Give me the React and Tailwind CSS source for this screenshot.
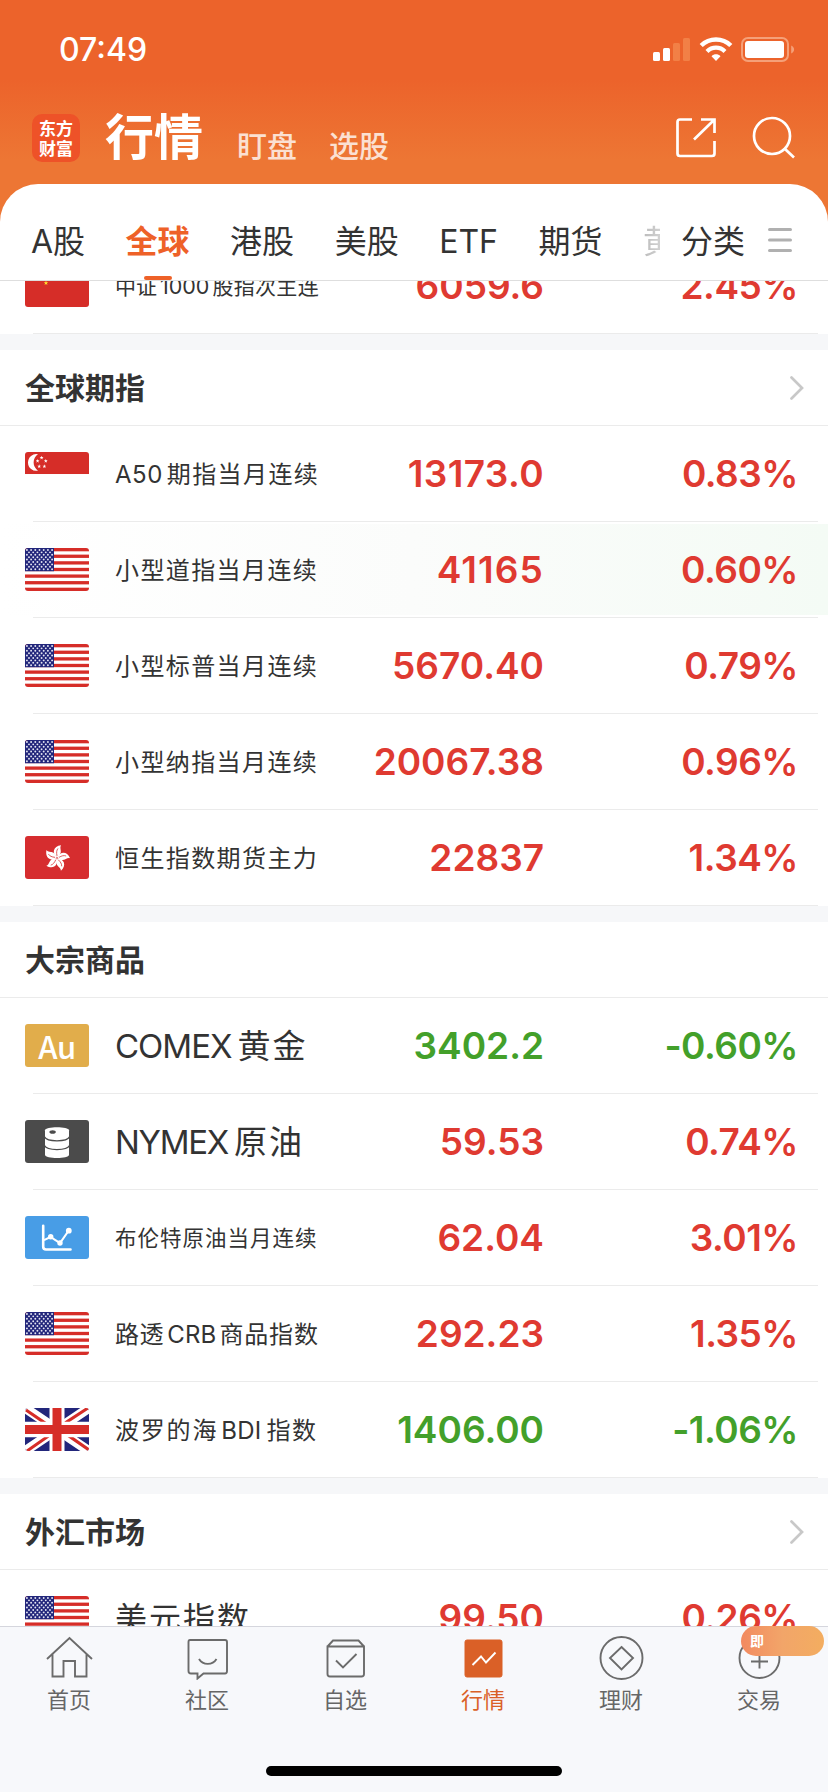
import React from 'react'

const SANS = "font-['Inter','Noto_Sans_CJK_SC',sans-serif]"
const CJK = "font-['Noto_Sans_CJK_SC',sans-serif]"

/* ---------- Flags ---------- */

const starRows = [0, 1, 2, 3, 4, 5, 6, 7, 8]

const FlagUS = () => (
  <svg viewBox="0 0 64 42" preserveAspectRatio="none" className="w-full h-full">
    <rect width="64" height="42" fill="#fff" />
    {[0, 2, 4, 6, 8, 10, 12].map((i) => (
      <rect key={i} y={i * 3.23} width="64" height="3.23" fill="#d62d28" />
    ))}
    <rect width="29" height="22.7" fill="#22267b" />
    {starRows.map((r) =>
      Array.from({ length: r % 2 ? 6 : 7 }).map((_, c) => (
        <circle
          key={`${r}-${c}`}
          cx={1.9 + c * 4.2 + (r % 2 ? 2.1 : 0)}
          cy={1.9 + r * 2.35}
          r="0.95"
          fill="#e4e5f2"
        />
      ))
    )}
  </svg>
)

const FlagUK = () => (
  <svg viewBox="0 0 64 42" preserveAspectRatio="none" className="w-full h-full">
    <rect width="64" height="42" fill="#22267b" />
    <path d="M0 0L64 42M64 0L0 42" stroke="#fff" strokeWidth="9.5" />
    <path d="M1 2L22 16M42 26L64 41" stroke="#d62d28" strokeWidth="3" />
    <path d="M63 0L38 16M27 25L2 42" stroke="#d62d28" strokeWidth="3" />
    <path d="M32 0V42M0 21H64" stroke="#fff" strokeWidth="15" />
    <path d="M32 0V42M0 21H64" stroke="#d62d28" strokeWidth="9" />
  </svg>
)

const star = (cx, cy, r) =>
  Array.from({ length: 10 })
    .map((_, i) => {
      const a = (Math.PI / 5) * i - Math.PI / 2
      const d = i % 2 ? r * 0.42 : r
      return `${cx + d * Math.cos(a)},${cy + d * Math.sin(a)}`
    })
    .join(' ')

const FlagSG = () => (
  <svg viewBox="0 0 64 42" preserveAspectRatio="none" className="w-full h-full">
    <rect width="64" height="42" fill="#fff" />
    <rect width="64" height="21.5" fill="#d62d28" />
    <path d="M13 2.2A8.2 8.2 0 1 0 13 18.2A9.5 9.5 0 0 1 13 2.2Z" fill="#fff" />
    {[[16.6, 5.6], [12.6, 8.8], [20.8, 8.8], [14.2, 14], [19.4, 14]].map(([x, y]) => (
      <polygon key={`${x}-${y}`} points={star(x, y, 2)} fill="#fff" />
    ))}
  </svg>
)

const FlagHK = () => (
  <svg viewBox="0 0 64 42" preserveAspectRatio="none" className="w-full h-full">
    <rect width="64" height="42" fill="#d62d2f" />
    {[12, 84, 156, 228, 300].map((deg) => (
      <g key={deg} transform={`rotate(${deg} 32 21.5)`}>
        <path d="M32 21C26 18.5 25.500 11 33.500 8.500C31.500 12 38 15 32 21Z" fill="#fff" />
        <path d="M31.600 19.500C30.200 16.500 30 14.200 31 12.200" stroke="#d62d2f" strokeWidth="0.7" fill="none" />
      </g>
    ))}
  </svg>
)

const FlagCN = () => (
  <svg viewBox="0 0 64 42" preserveAspectRatio="none" className="w-full h-full">
    <rect width="64" height="42" fill="#d62d28" />
    <polygon points={star(11, 10, 6)} fill="#ffde2e" />
    <polygon points={star(21, 4.5, 2.2)} fill="#ffde2e" />
    <polygon points={star(25, 8.5, 2.2)} fill="#ffde2e" />
    <polygon points={star(25, 13, 2.2)} fill="#ffde2e" />
    <polygon points={star(21, 18.6, 2.4)} fill="#ffde2e" />
  </svg>
)

const IconGold = () => (
  <div className="w-full h-full bg-[#e1ad4b] flex items-center justify-center">
    <span className="font-['Noto_Sans_CJK_SC',sans-serif] font-medium text-[31px] leading-none text-white tracking-[-0.3px] -mt-px">
      Au
    </span>
  </div>
)

const IconOil = () => (
  <svg viewBox="0 0 64 42" preserveAspectRatio="none" className="w-full h-full">
    <rect width="64" height="42" fill="#4b4b4b" />
    <path d="M20 10C20 6 44 6 44 10V34C44 38.200 20 38.200 20 34Z" fill="#fff" />
    <path d="M19.500 16.500C22 21.600 42 21.600 44.500 16.500M19.500 25C22 30.200 42 30.200 44.500 25" stroke="#4b4b4b" strokeWidth="1.2" fill="none" />
    <ellipse cx="27.600" cy="11.800" rx="3.200" ry="1.700" fill="#4b4b4b" />
  </svg>
)

const IconChart = () => (
  <svg viewBox="0 0 64 42" preserveAspectRatio="none" className="w-full h-full">
    <rect width="64" height="42" fill="#489de6" />
    <path d="M18.200 9.500V30Q18.200 32.700 21 32.700H45.500" stroke="#fff" strokeWidth="2.6" strokeLinecap="round" fill="none" />
    <path d="M19 23.500L25.500 20.500L35 26.500L43.500 14.500" stroke="#fff" strokeWidth="2" fill="none" />
    <circle cx="25.700" cy="20.300" r="2.700" fill="#fff" />
    <circle cx="35" cy="26.300" r="2.700" fill="#fff" />
    <circle cx="43.800" cy="14.300" r="2.900" fill="#fff" />
  </svg>
)

/* ---------- Quotes ---------- */

const sections = [
  {
    title: '全球期指',
    more: true,
    rows: [
      { flag: FlagSG, name: [['A50', 'text-[24px] tracking-[0.5px] mr-[4px]'], ['期指当月连续', 'text-[24px] tracking-[1.4px]']], price: '13173.0', pct: '0.83%', spread: 'tracking-[0.4px]' },
      { flag: FlagUS, name: [['小型道指当月连续', 'text-[24px] tracking-[1.4px]']], price: '41165', pct: '0.60%', flash: true, spread: 'tracking-[1.1px]' },
      { flag: FlagUS, name: [['小型标普当月连续', 'text-[24px] tracking-[1.4px]']], price: '5670.40', pct: '0.79%' },
      { flag: FlagUS, name: [['小型纳指当月连续', 'text-[24px] tracking-[1.4px]']], price: '20067.38', pct: '0.96%' },
      { flag: FlagHK, name: [['恒生指数期货主力', 'text-[24px] tracking-[1.4px]']], price: '22837', pct: '1.34%' },
    ],
  },
  {
    title: '大宗商品',
    rows: [
      { flag: IconGold, name: [['COMEX', 'text-[33px] tracking-[-1px] mr-[6px]'], ['黄金', 'text-[33px] tracking-[2px]']], price: '3402.2', pct: '-0.60%' },
      { flag: IconOil, name: [['NYMEX', 'text-[33px] tracking-[-1.3px] mr-[6px]'], ['原油', 'text-[33px] tracking-[2px]']], price: '59.53', pct: '0.74%' },
      { flag: IconChart, name: [['布伦特原油当月连续', 'text-[21.5px] tracking-[1px]']], price: '62.04', pct: '3.01%' },
      { flag: FlagUS, name: [['路透', 'text-[24px] tracking-[0.6px]'], ['CRB', 'text-[24px] tracking-[0.2px] mx-[3px]'], ['商品指数', 'text-[24px] tracking-[0.8px]']], price: '292.23', pct: '1.35%' },
      { flag: FlagUK, name: [['波罗的海', 'text-[24px] tracking-[1.8px]'], ['BDI', 'text-[24px] tracking-[0.3px] mx-[3px] pr-[2px]'], ['指数', 'text-[24px] tracking-[1.4px]']], price: '1406.00', pct: '-1.06%' },
    ],
  },
  {
    title: '外汇市场',
    more: true,
    rows: [
      { flag: FlagUS, name: [['美元指数', 'text-[32px] tracking-[2px]']], price: '99.50', pct: '0.26%' },
    ],
  },
]

const lastOfPrevious = {
  flag: FlagCN,
  name: [['中证', 'text-[21px]'], ['1000', 'text-[21.5px] mx-[3px]'], ['股指次主连', 'text-[21px] tracking-[0.3px]']],
  price: '6059.6',
  pct: '2.45%',
}

const QuoteRow = ({ row }) => {
  const Flag = row.flag
  const color = row.pct.startsWith('-') ? 'text-[#43a02a]' : 'text-[#df3a31]'
  return (
    <div className="h-24 shrink-0 flex flex-col">
      <div
        className={`flex-1 flex items-center pl-[25px] ${
          row.flash ? 'my-[2px] bg-gradient-to-r from-white via-[#fbfcfb] to-[#f4fbf5]' : ''
        }`}
      >
        <div className="w-16 h-[43px] shrink-0 rounded-[3px] overflow-hidden">
          <Flag />
        </div>
        <div className="w-[215px] ml-[26px] pt-[2px] shrink-0 flex items-center whitespace-nowrap text-[#333]">
          {row.name.map(([text, style]) => (
            <span key={text} className={`leading-none ${style}`}>{text}</span>
          ))}
        </div>
        <div className={`w-[214px] text-right text-[37px] leading-none font-semibold ${color} ${row.spread || ''}`}>{row.price}</div>
        <div className={`w-[254px] text-right text-[37px] leading-none font-semibold tracking-[-0.5px] ${color}`}>{row.pct}</div>
      </div>
      <div className="h-px ml-[33px] mr-[10px] bg-[#ebebeb]" />
    </div>
  )
}

const Section = ({ section }) => (
  <div className="shrink-0">
    <div className="h-4 bg-[#f6f7f9]" />
    <div className="h-[76px] border-b border-[#ebebeb] pl-[25px] pr-6 flex items-center justify-between">
      <h2 className={`${CJK} -mt-1 text-[30px] leading-none font-bold text-[#333]`}>{section.title}</h2>
      {section.more && (
        <svg width="14" height="24" viewBox="0 0 14 24" fill="none">
          <path d="M1.500 1.500L12 12L1.500 22.500" stroke="#c8c8c8" strokeWidth="2.700" strokeLinecap="round" />
        </svg>
      )}
    </div>
    {section.rows.map((row) => (
      <QuoteRow key={row.price} row={row} />
    ))}
  </div>
)

/* ---------- Header ---------- */

const StatusBar = () => (
  <div className="h-[99px] pl-[59px] pr-8 flex items-center justify-between">
    <span className="text-[32px] leading-none font-medium text-white">07:49</span>
    <svg width="143" height="26" viewBox="0 0 143 26" fill="none">
      <rect x="0" y="15" width="7" height="9" rx="1.500" fill="#fff" />
      <rect x="10" y="11" width="7" height="13" rx="1.500" fill="#fff" />
      <rect x="20" y="6" width="7" height="18" rx="1.500" fill="#f28046" />
      <rect x="30" y="1" width="7" height="23" rx="1.500" fill="#f28046" />
      <path d="M48.200 8.500C56.500 0.500 69.500 0.500 77.800 8.500" stroke="#fff" strokeWidth="4.500" />
      <path d="M54 14.500C59 9.400 67 9.400 72 14.500" stroke="#fff" strokeWidth="4.200" />
      <path d="M58.500 19.200C61 16.700 65 16.700 67.500 19.200L63 24Z" fill="#fff" />
      <rect x="89" y="1" width="46" height="23" rx="6" stroke="#f5a078" strokeWidth="2" />
      <rect x="92" y="4" width="39" height="17" rx="3" fill="#fff" />
      <path d="M138.200 8.500C142 10 142 15 138.200 16.500Z" fill="#f5a078" />
    </svg>
  </div>
)

const TitleBar = () => (
  <div className="h-[85px] pl-8 pr-8 flex items-start justify-between">
    <div className={`${CJK} flex items-start text-white`}>
      <div className="w-12 h-12 mt-[15px] rounded-[10px] bg-[#ee5228] flex flex-col items-center justify-center text-[17px] leading-[20px] font-bold">
        <span>东方</span>
        <span>财富</span>
      </div>
      <h1 className="ml-[25px] mt-[11px] text-[49px] leading-[48px] font-bold">行情</h1>
      <span className="ml-[34px] mt-[30px] text-[30px] leading-[30px] font-medium text-[#fbe0d2]">盯盘</span>
      <span className="ml-8 mt-[30px] text-[30px] leading-[30px] font-medium text-[#fbe0d2]">选股</span>
    </div>
    <div className="flex items-start mt-[17px]">
      <svg width="42" height="44" viewBox="0 0 42 44" fill="none" stroke="#fff" strokeWidth="2.700">
        <path d="M17 3.500H5Q2.500 3.500 2.500 6V37.500Q2.500 40 5 40H37Q39.500 40 39.500 37.500V25" />
        <path d="M26 3.500H39.500V17M39 4L19 23.500" />
      </svg>
      <svg width="44" height="44" viewBox="0 0 44 44" fill="none" stroke="#fff" strokeWidth="2.700" className="ml-[35px]">
        <circle cx="20" cy="20" r="18" />
        <path d="M32.500 32.500L42 41.500" />
      </svg>
    </div>
  </div>
)

const tabs = ['A股', '全球', '港股', '美股', 'ETF', '期货']

const Tabs = () => (
  <div className="h-[97px] bg-white rounded-t-[38px] border-b border-[#dedede] flex pl-[31px] text-[32px] leading-none text-[#333]">
    <div className="flex gap-[40.500px] w-[629px] overflow-hidden whitespace-nowrap">
      {tabs.map((tab) =>
        tab === '全球' ? (
          <div key={tab} className="flex flex-col items-center justify-between pt-[42px] font-bold text-[#ee6128]">
            <span>{tab}</span>
            <i className="w-7 h-1 rounded-full bg-[#ee6128]" />
          </div>
        ) : (
          <div key={tab} className="pt-[42px]">{tab}</div>
        )
      )}
      <div className="pt-[42px] bg-gradient-to-r from-[#bbb] to-[#eee] to-60% bg-clip-text text-transparent">黄金</div>
    </div>
    <div className="pt-[42px] ml-[21px]">分类</div>
    <svg width="24" height="26" viewBox="0 0 24 26" stroke="#b0b0b0" strokeWidth="3" strokeLinecap="round" className="mt-[43px] ml-[23px]">
      <path d="M1.500 2.500H22.500M1.500 13H22.500M1.500 23.500H22.500" />
    </svg>
  </div>
)

/* ---------- Bottom bar ---------- */

const navItems = [
  {
    label: '首页',
    icon: (
      <path d="M1 23L23.500 2L46 23M6.500 18.500V40.500H17.500V25H29V40.500H40.500V18.500" />
    ),
  },
  {
    label: '社区',
    icon: (
      <>
        <path d="M6 4H41Q43 4 43 6V35Q43 37.500 41 37.500H19.500L13.500 42.500V37.500H7Q4.500 37.500 4.500 35V6Q4.500 4 6 4Z" />
        <path d="M15 23C19 29.500 28.500 29.500 32.500 23" />
      </>
    ),
  },
  {
    label: '自选',
    icon: (
      <>
        <path d="M5.500 10.500H42V38Q42 40.500 39.500 40.500H8Q5.500 40.500 5.500 38ZM5.500 10.500L11 4.500H36.500L42 10.500" />
        <path d="M14 24.500L21 31.500L34.500 18" />
      </>
    ),
  },
  {
    label: '行情',
    active: true,
    icon: (
      <>
        <rect x="5" y="4" width="37" height="37" rx="2" fill="#da6027" stroke="#da6027" strokeWidth="1" />
        <path d="M12.500 29L21 20.500L26 26.500L35.500 16.500" stroke="#fff" />
      </>
    ),
  },
  {
    label: '理财',
    icon: (
      <>
        <circle cx="23.500" cy="22" r="21" />
        <path d="M23.500 11L35 22L23.500 33.500L12 22Z" />
      </>
    ),
  },
  {
    label: '交易',
    icon: (
      <>
        <circle cx="23.500" cy="22" r="20" />
        <path d="M23.500 12V32.500M15 25.500H32" />
      </>
    ),
  },
]

const BottomNav = () => (
  <div className="h-[166px] shrink-0 relative bg-[#f7f8fb] border-t border-[#d5d6dd] flex flex-col">
    <div className="grid grid-cols-6 pt-[9px]">
      {navItems.map((item) => (
        <div key={item.label} className="flex flex-col items-center">
          <svg width="47" height="44" viewBox="0 0 47 44" fill="none" stroke="#6b6b6b" strokeWidth="1.900">
            {item.icon}
          </svg>
          <span className={`${CJK} mt-[7px] text-[22px] leading-[22px] ${item.active ? 'text-[#da6027]' : 'text-[#666]'}`}>
            {item.label}
          </span>
        </div>
      ))}
    </div>
    <div className="w-[296px] h-[10px] rounded-full bg-black mx-auto mt-auto mb-4" />
    {/* Promo badge over the trade tab */}
    <div className={`${CJK} absolute -top-px right-1 w-[83px] h-[30px] rounded-full pl-[9px] bg-gradient-to-r from-[#f28a60] via-[#f2a569] to-[#f3ad60] text-[14px] leading-[28px] font-bold text-white`}>
      即
    </div>
  </div>
)

const App = () => {
  return (
    <div className={`${SANS} w-[828px] h-[1792px] overflow-hidden flex flex-col bg-white`}>
      <div className="shrink-0 bg-[linear-gradient(to_bottom,#ec632b_0px,#ec632b_80px,#ed7634_160px,#ed7634_100%)]">
        <StatusBar />
        <TitleBar />
        <Tabs />
      </div>

      <div className="flex-1 min-h-0 overflow-hidden flex flex-col">
        <div className="h-[53px] shrink-0 overflow-hidden flex flex-col justify-end">
          <QuoteRow row={lastOfPrevious} />
        </div>
        {sections.map((section) => (
          <Section key={section.title} section={section} />
        ))}
      </div>

      <BottomNav />
    </div>
  )
}

export default App
